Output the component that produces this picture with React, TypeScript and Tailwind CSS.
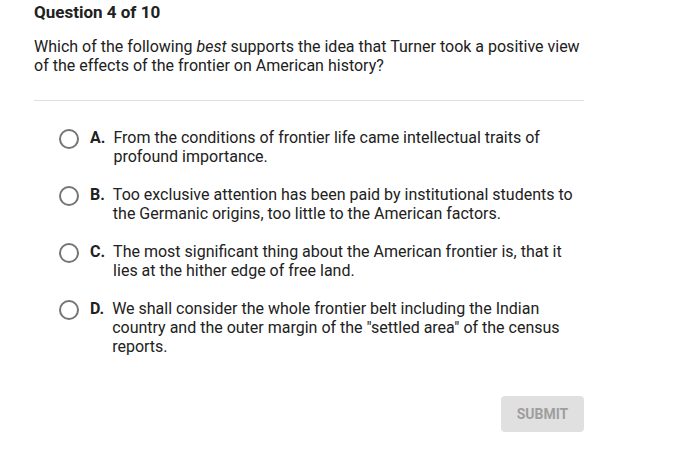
const options = [
  { letter: "A.", text: "From the conditions of frontier life came intellectual traits of profound importance." },
  { letter: "B.", text: "Too exclusive attention has been paid by institutional students to the Germanic origins, too little to the American factors." },
  { letter: "C.", text: "The most significant thing about the American frontier is, that it lies at the hither edge of free land." },
  { letter: "D.", text: "We shall consider the whole frontier belt including the Indian country and the outer margin of the \"settled area\" of the census reports." },
];

export default function App() {
  return (
    <div className="min-h-screen bg-white font-['Roboto',sans-serif] text-[#212121]">
      <div className="w-[550px] ml-[34px]">
        <h1 className="text-[17px] leading-6 font-bold">Question 4 of 10</h1>
        <p className="mt-[13px] text-[16px] leading-[19px] pb-[25px] border-b border-[#e0e0e0]">
          Which of the following <em>best</em> supports the idea that Turner took a positive view of the effects of the frontier on American history?
        </p>

        {/* Answers */}
        <div className="mt-[27px] pl-[25px] flex flex-col gap-[19px]">
          {options.map((o) => (
            <div key={o.letter} className="flex items-start">
              <span className="mt-[1px] w-5 h-5 shrink-0 rounded-full border-2 border-[#757575]" />
              <div className="ml-[11px] flex gap-2 text-[16px] leading-[19px]">
                <span className="font-bold shrink-0">{o.letter}</span>
                <span>{o.text}</span>
              </div>
            </div>
          ))}
        </div>

        <div className="mt-[40px] flex justify-end">
          <button className="w-[83px] h-9 rounded bg-[#e0e0e0] text-[14px] font-bold text-[#9e9e9e]">
            SUBMIT
          </button>
        </div>
      </div>
    </div>
  );
}
